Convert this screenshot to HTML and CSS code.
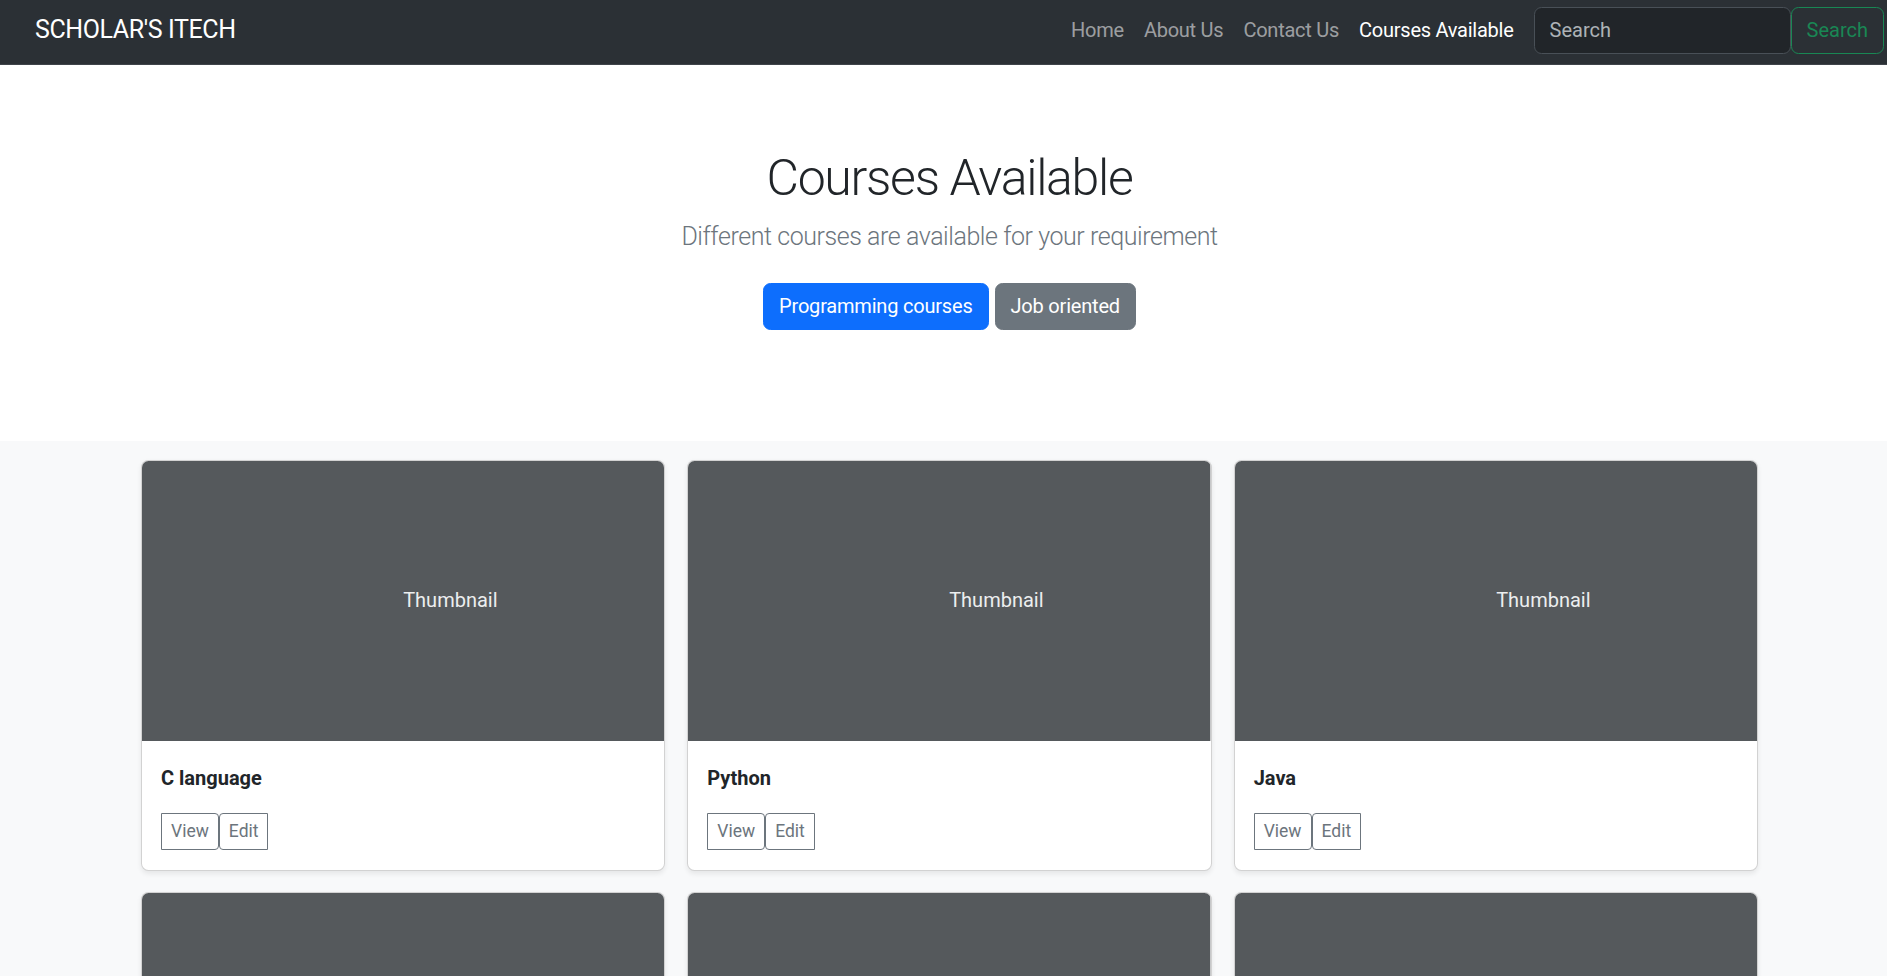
FILE: index.html
```html
<!DOCTYPE html>
<html lang="en">
<head>
<meta charset="utf-8">
<title>Scholar's iTech – Courses Available</title>
<link rel="stylesheet" href="styles.css">
</head>
<body>
<header class="navbar">
  <a class="brand" href="#">SCHOLAR'S ITECH</a>
  <ul class="nav">
    <li><a class="nav-link" href="#">Home</a></li>
    <li><a class="nav-link" href="#">About Us</a></li>
    <li><a class="nav-link" href="#">Contact Us</a></li>
    <li><a class="nav-link active" href="#">Courses Available</a></li>
  </ul>
  <form class="search">
    <input class="search-input" type="search" placeholder="Search" aria-label="Search">
    <button class="search-btn" type="button">Search</button>
  </form>
</header>
<main>
  <section class="hero">
    <h1 class="hero-title">Courses Available</h1>
    <p class="lead">Different courses are available for your requirement</p>
    <div class="hero-actions">
      <a href="#" class="btn btn-primary">Programming courses</a>
      <a href="#" class="btn btn-secondary">Job oriented</a>
    </div>
  </section>
  <div class="album">
    <div class="grid">
      <div class="card">
        <svg class="thumb" width="100%" height="280" role="img" aria-label="Placeholder: Thumbnail"><rect width="100%" height="100%" class="thumb-bg"/><text x="50%" y="50%" dy=".3em" class="thumb-text">Thumbnail</text></svg>
        <div class="card-body">
          <p class="card-title">C language</p>
          <div class="btn-group"><button type="button" class="btn-sm btn-view">View</button><button type="button" class="btn-sm btn-edit">Edit</button></div>
        </div>
      </div>
      <div class="card">
        <svg class="thumb" width="100%" height="280" role="img" aria-label="Placeholder: Thumbnail"><rect width="100%" height="100%" class="thumb-bg"/><text x="50%" y="50%" dy=".3em" class="thumb-text">Thumbnail</text></svg>
        <div class="card-body">
          <p class="card-title">Python</p>
          <div class="btn-group"><button type="button" class="btn-sm btn-view">View</button><button type="button" class="btn-sm btn-edit">Edit</button></div>
        </div>
      </div>
      <div class="card">
        <svg class="thumb" width="100%" height="280" role="img" aria-label="Placeholder: Thumbnail"><rect width="100%" height="100%" class="thumb-bg"/><text x="50%" y="50%" dy=".3em" class="thumb-text">Thumbnail</text></svg>
        <div class="card-body">
          <p class="card-title">Java</p>
          <div class="btn-group"><button type="button" class="btn-sm btn-view">View</button><button type="button" class="btn-sm btn-edit">Edit</button></div>
        </div>
      </div>
      <div class="card">
        <svg class="thumb" width="100%" height="280" role="img" aria-label="Placeholder: Thumbnail"><rect width="100%" height="100%" class="thumb-bg"/><text x="50%" y="50%" dy=".3em" class="thumb-text">Thumbnail</text></svg>
        <div class="card-body">
          <p class="card-title">C++</p>
          <div class="btn-group"><button type="button" class="btn-sm btn-view">View</button><button type="button" class="btn-sm btn-edit">Edit</button></div>
        </div>
      </div>
      <div class="card">
        <svg class="thumb" width="100%" height="280" role="img" aria-label="Placeholder: Thumbnail"><rect width="100%" height="100%" class="thumb-bg"/><text x="50%" y="50%" dy=".3em" class="thumb-text">Thumbnail</text></svg>
        <div class="card-body">
          <p class="card-title">JavaScript</p>
          <div class="btn-group"><button type="button" class="btn-sm btn-view">View</button><button type="button" class="btn-sm btn-edit">Edit</button></div>
        </div>
      </div>
      <div class="card">
        <svg class="thumb" width="100%" height="280" role="img" aria-label="Placeholder: Thumbnail"><rect width="100%" height="100%" class="thumb-bg"/><text x="50%" y="50%" dy=".3em" class="thumb-text">Thumbnail</text></svg>
        <div class="card-body">
          <p class="card-title">PHP</p>
          <div class="btn-group"><button type="button" class="btn-sm btn-view">View</button><button type="button" class="btn-sm btn-edit">Edit</button></div>
        </div>
      </div>
    </div>
  </div>
</main>
</body>
</html>
```

FILE: styles.css
```css
html, body {
  margin: 0;
  padding: 0;
}

body {
  font-family: "Segoe UI", Roboto, "Liberation Sans", sans-serif;
  font-size: 20px;
  line-height: 1.5;
  color: #212529;
  background: #fff;
}

/* ---------- Navbar ---------- */
.navbar {
  display: flex;
  align-items: center;
  height: 60px;
  padding: 0 3px 4px 35px;
  background: #2b3035;
  border-bottom: 1px solid #3f444a;
}

.brand {
  font-size: 25px;
  line-height: 1.5;
  letter-spacing: -0.4px;
  color: #fff;
  text-decoration: none;
  white-space: nowrap;
}

.nav {
  display: flex;
  list-style: none;
  margin: 0 0 0 auto;
  padding: 0;
}

.nav-link {
  display: block;
  padding: 7px 10px;
  font-size: 20px;
  line-height: 30px;
  letter-spacing: -0.25px;
  color: rgba(255, 255, 255, 0.55);
  text-decoration: none;
  white-space: nowrap;
}

.nav-link.active {
  color: #fff;
}

.search {
  display: flex;
  margin: 0 0 0 10px;
}

.search-input {
  box-sizing: border-box;
  width: 257px;
  height: 47px;
  padding: 0 15px;
  font-family: inherit;
  font-size: 20px;
  color: #dee2e6;
  background: #212529;
  border: 1px solid #495057;
  border-radius: 7.5px;
  outline: none;
}

.search-input::placeholder {
  color: rgba(222, 226, 230, 0.75);
}

.search-btn {
  box-sizing: border-box;
  height: 47px;
  padding: 0 15px;
  font-family: inherit;
  font-size: 20px;
  color: #198754;
  background: transparent;
  border: 1px solid #198754;
  border-radius: 7.5px;
}

/* ---------- Hero ---------- */
.hero {
  padding: 83px 0 101px 12px;
  text-align: center;
  background: #fff;
}

.hero-title {
  margin: 0 0 10px;
  font-size: 50px;
  font-weight: 300;
  line-height: 1.2;
  letter-spacing: -1.3px;
  color: #212529;
}

.lead {
  margin: 0 0 17px;
  font-size: 25px;
  font-weight: 300;
  line-height: 1.5;
  letter-spacing: -0.44px;
  color: #6c757d;
}

.hero-actions {
  display: flex;
  justify-content: center;
  gap: 6px;
}

.btn {
  display: inline-block;
  margin: 10px 0;
  padding: 7.5px 15px;
  font-size: 20px;
  line-height: 30px;
  letter-spacing: -0.2px;
  color: #fff;
  text-decoration: none;
  border: 1px solid transparent;
  border-radius: 7.5px;
}

.btn-primary {
  background: #0d6efd;
  border-color: #0d6efd;
}

.btn-secondary {
  background: #6c757d;
  border-color: #6c757d;
}

/* ---------- Album ---------- */
.album {
  padding: 19px 0 60px 12px;
  background: #f8f9fa;
}

.grid {
  display: grid;
  grid-template-columns: repeat(3, 1fr);
  gap: 21px 22px;
  width: 1617px;
  margin: 0 auto;
}

.card {
  display: flex;
  flex-direction: column;
  background: #fff;
  border: 1px solid rgba(0, 0, 0, 0.175);
  border-radius: 7.5px;
  overflow: hidden;
  box-shadow: 0 2.5px 5px rgba(0, 0, 0, 0.075);
}

.thumb {
  display: block;
}

.thumb-bg {
  fill: #55595c;
}

.thumb-text {
  fill: #eceeef;
  font-family: "Segoe UI", Roboto, "Liberation Sans", sans-serif;
  font-size: 20px;
}

.card-body {
  padding: 22px 19px 20px;
}

.card-title {
  margin: 0 0 20px;
  font-size: 20px;
  font-weight: 700;
  line-height: 30px;
  color: #212529;
}

.btn-group {
  display: flex;
}

.btn-sm {
  padding: 4px 9px;
  font-family: inherit;
  font-size: 17.5px;
  line-height: 27px;
  color: #6c757d;
  background: transparent;
  border: 1px solid #6c757d;
}

.btn-view {
  border-radius: 0 4px 4px 0;
}

.btn-edit {
  border-radius: 4px 0 0 4px;
}
```
